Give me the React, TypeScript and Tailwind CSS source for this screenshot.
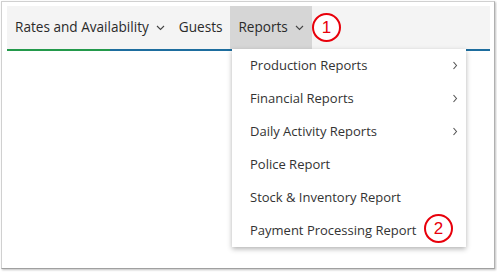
import React from "react";

const Chevron = () => (
  <svg width="9" height="6" viewBox="0 0 9 6" className="ml-[7px]">
    <path d="M1 1 L4.5 4.5 L8 1" fill="none" stroke="#444" strokeWidth="1.1" />
  </svg>
);

const Right = () => (
  <svg width="6" height="9" viewBox="0 0 6 9">
    <path d="M1.5 1 L4.5 4.5 L1.5 8" fill="none" stroke="#555" strokeWidth="1.1" />
  </svg>
);

const Badge = ({ n }: { n: string }) => (
  <div className="w-[29px] h-[29px] rounded-full border-[2.5px] border-[#e8000b] bg-white flex items-center justify-center text-[#e8000b] text-[17px] leading-none" style={{ fontFamily: "'Liberation Sans', Arial, sans-serif" }}>
    {n}
  </div>
);

const items = [
  { t: "Production Reports", sub: true },
  { t: "Financial Reports", sub: true },
  { t: "Daily Activity Reports", sub: true },
  { t: "Police Report", sub: false },
  { t: "Stock & Inventory Report", sub: false },
  { t: "Payment Processing Report", sub: false },
];

export default function App() {
  return (
    <div className="w-[497px] h-[272px] bg-white relative" style={{ fontFamily: "'Open Sans', sans-serif" }}>
      <div className="absolute left-[1px] top-[1px] w-[494px] h-[268px] border border-[#d0d0d0] border-b-[#a0a0a0] border-r-[#b0b0b0] shadow-[1px_1px_2px_rgba(0,0,0,0.25)] bg-white pl-[5px] pr-[4px] pt-[4px]">
        <div className="relative">
          <div className="flex h-[43px] bg-[#f4f4f4] items-stretch text-[13.6px] text-[#2a2a2a]">
            <div className="flex items-center pl-[8px] pr-[7px]">
              <span>Rates and Availability</span>
              <Chevron />
            </div>
            <div className="flex items-center pl-[7px] pr-[8px]">Guests</div>
            <div className="flex items-center pl-[8px] pr-[8px] bg-[#d6d6d6]">
              <span>Reports</span>
              <Chevron />
            </div>
            <div className="flex items-center">
              <Badge n="1" />
            </div>
          </div>
          <div className="flex h-[2px]">
            <div className="w-[103px] bg-[#23994b]" />
            <div className="flex-1 bg-[#1d6d9e]" />
          </div>
          <div className="absolute left-[225px] top-[43px] w-[234px] bg-white shadow-[0_2px_5px_rgba(0,0,0,0.3)] text-[13px] text-[#333] z-10">
            {items.map((it, i) => (
              <div key={i} className="h-[33px] flex items-center pl-[18px] pr-[8px]">
                <span className="flex-1">{it.t}</span>
                {it.sub && <Right />}
                {i === 5 && (
                  <div className="absolute left-[192px] top-[165px]">
                    <Badge n="2" />
                  </div>
                )}
              </div>
            ))}
          </div>
        </div>
      </div>
    </div>
  );
}
